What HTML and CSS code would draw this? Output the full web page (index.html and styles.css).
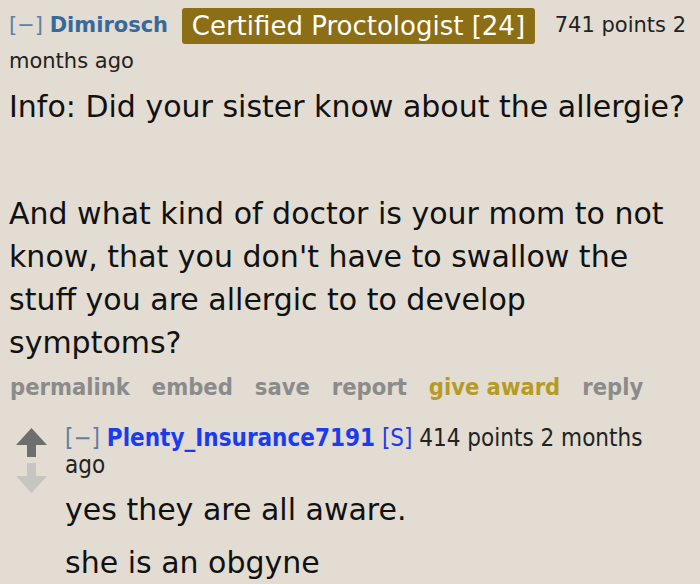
FILE: index.html
```html
<!DOCTYPE html>
<html>
<head>
<meta charset="utf-8">
<link rel="stylesheet" href="styles.css">
</head>
<body>
<div class="comment">
  <p class="tagline">
    <span class="expand">[&minus;]</span> <a class="author">Dimirosch</a> <span class="flair">Certified Proctologist [24]</span> <span class="score">741 points</span> 2 months ago
  </p>
  <div class="md">
    <p>Info: Did your sister know about the allergie?</p>
    <p class="spacer">&nbsp;</p>
    <p>And what kind of doctor is your mom to not know, that you don't have to swallow the stuff you are allergic to to develop symptoms?</p>
  </div>
  <ul class="buttons">
    <li>permalink</li>
    <li>embed</li>
    <li>save</li>
    <li>report</li>
    <li class="gold">give award</li>
    <li>reply</li>
  </ul>
  <div class="child">
    <div class="votes">
      <svg width="32" height="66" viewBox="0 0 32 66" class="arrows">
        <path d="M15.5 0 L31 17 L20 17 L20 29 L11 29 L11 17 L0 17 Z" fill="#6e6e6e"/>
        <path d="M11 35 L20 35 L20 48 L31 48 L15.5 65 L0 48 L11 48 Z" fill="#c7c5c2"/>
      </svg>
    </div>
    <div class="entry">
      <p class="tagline2"><span class="expand2">[&minus;]</span> <a class="author2">Plenty_Insurance7191</a> <span class="sub">[S]</span> 414 points 2 months ago</p>
      <div class="md2">
        <p>yes they are all aware.</p>
        <p>she is an obgyne</p>
      </div>
    </div>
  </div>
</div>
</body>
</html>
```
FILE: styles.css
```css
html, body {
  margin: 0;
  padding: 0;
  background: #e2dcd3;
}
body {
  font-family: "DejaVu Sans", Verdana, sans-serif;
  color: #111;
  overflow: hidden;
}
.comment {
  padding: 8px 0 0 9px;
}
.tagline {
  margin: 0;
  font-size: 21px;
  line-height: 35px;
  color: #222;
}
.expand {
  color: #5f7fa8;
  font-weight: normal;
}
.author {
  color: #36699c;
  font-weight: bold;
}
.flair {
  display: inline-block;
  background: #8c6e16;
  color: #fff;
  font-size: 26px;
  line-height: 36px;
  padding: 0 10px;
  border-radius: 3px;
  margin: 0 13px 0 7px;
  vertical-align: top;
}
.score { color: #222; }
.md {
  margin-top: 6px;
  font-size: 30px;
  line-height: 43px;
}
.md p {
  margin: 0;
}
.spacer { height: 64px; }
.buttons {
  list-style: none;
  margin: 6px 0 0 0;
  padding: 0 0 0 1px;
  display: flex;
  gap: 22px;
  font-family: "DejaVu Sans Condensed", "DejaVu Sans", sans-serif;
  font-weight: bold;
  font-size: 23.5px;
  line-height: 34px;
  color: #8b8b8b;
}
.buttons .gold { color: #b59b25; }
.child {
  display: flex;
  margin-top: 21px;
}
.votes {
  width: 49px;
  padding-left: 7px;
  padding-top: 3px;
}
.arrows { display: block; }
.entry {
  flex: 1;
}
.tagline2 {
  margin: 0;
  font-family: "DejaVu Sans Condensed", "DejaVu Sans", sans-serif;
  font-size: 24px;
  line-height: 27px;
  color: #222;
  padding-right: 20px;
}
.expand2 { color: #5f7fa8; }
.author2 { color: #1a3cf0; font-weight: bold; }
.sub { color: #1a3cf0; }
.md2 {
  margin-top: 4px;
  font-size: 30px;
  line-height: 53px;
}
.md2 p { margin: 0; }
```
